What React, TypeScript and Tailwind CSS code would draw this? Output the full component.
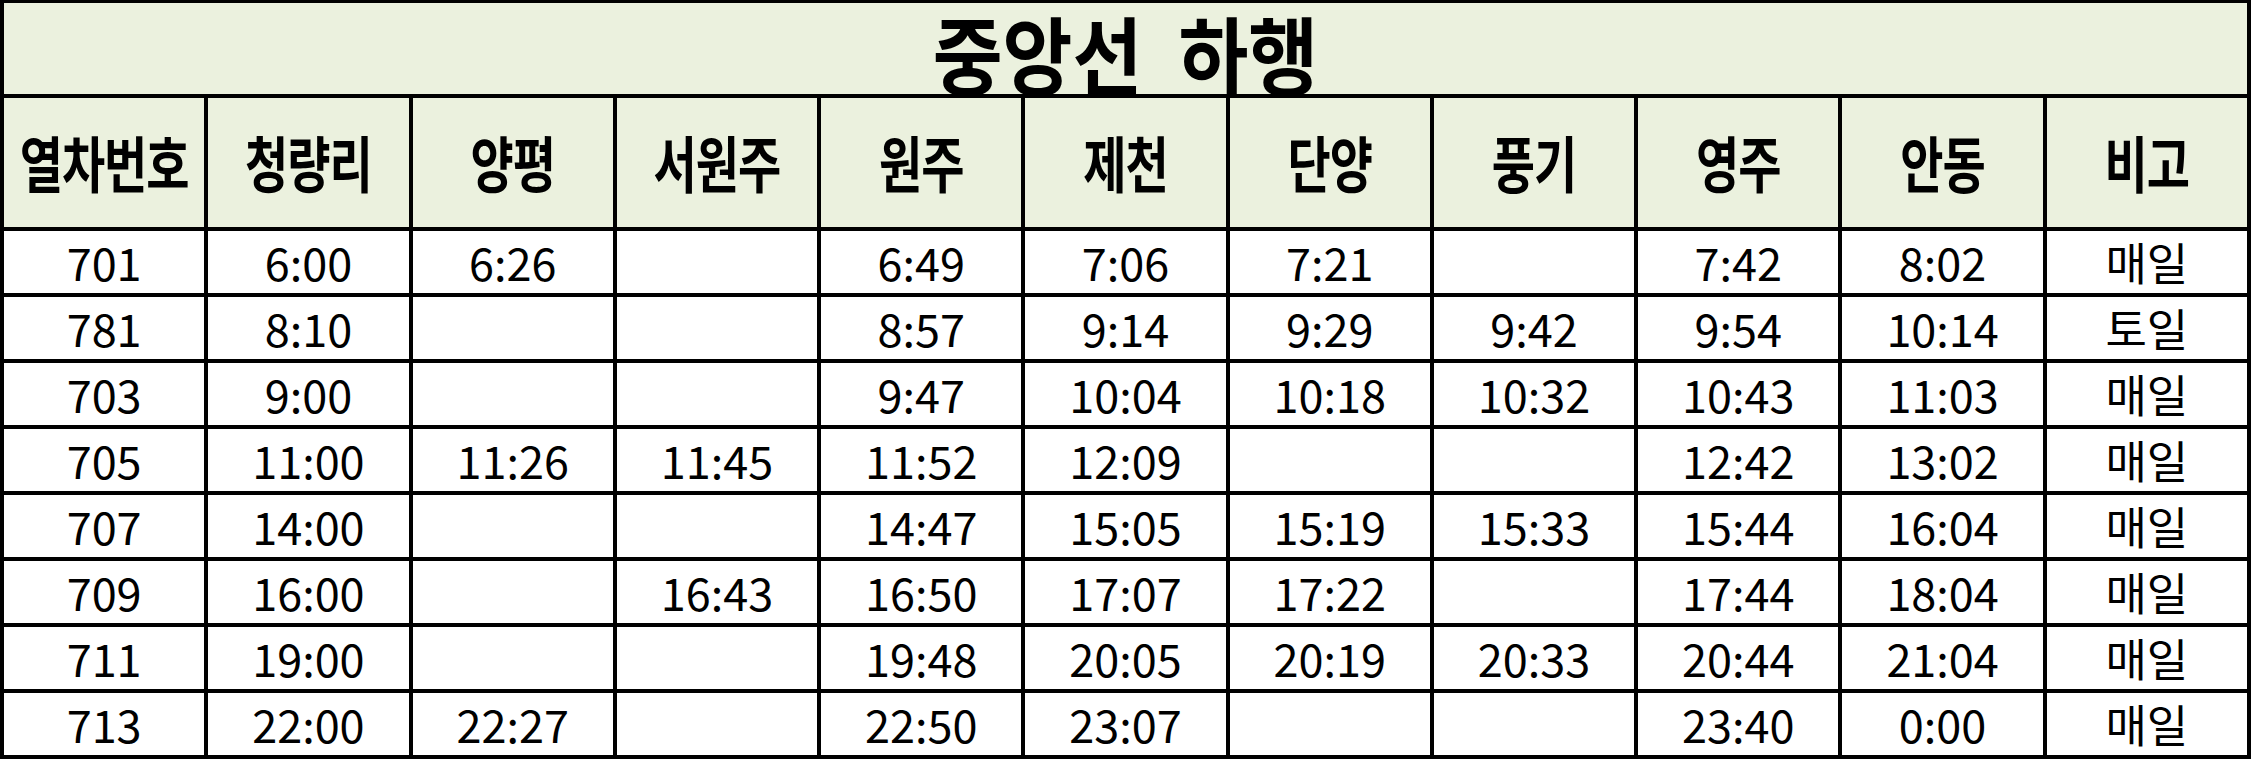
const stations = ["열차번호", "청량리", "양평", "서원주", "원주", "제천", "단양", "풍기", "영주", "안동", "비고"];

const trains: string[][] = [
  ["701", "6:00", "6:26", "", "6:49", "7:06", "7:21", "", "7:42", "8:02", "매일"],
  ["781", "8:10", "", "", "8:57", "9:14", "9:29", "9:42", "9:54", "10:14", "토일"],
  ["703", "9:00", "", "", "9:47", "10:04", "10:18", "10:32", "10:43", "11:03", "매일"],
  ["705", "11:00", "11:26", "11:45", "11:52", "12:09", "", "", "12:42", "13:02", "매일"],
  ["707", "14:00", "", "", "14:47", "15:05", "15:19", "15:33", "15:44", "16:04", "매일"],
  ["709", "16:00", "", "16:43", "16:50", "17:07", "17:22", "", "17:44", "18:04", "매일"],
  ["711", "19:00", "", "", "19:48", "20:05", "20:19", "20:33", "20:44", "21:04", "매일"],
  ["713", "22:00", "22:27", "", "22:50", "23:07", "", "", "23:40", "0:00", "매일"],
];

export default function App() {
  return (
    <div
      className="w-[2251px] h-[759px] bg-white"
      style={{ fontFamily: '"Noto Sans CJK KR", "Noto Sans", sans-serif' }}
    >
      <div className="grid grid-cols-11 grid-rows-[91px_129px_repeat(8,62px)] gap-[4px] bg-black px-[4px] pt-[3px] pb-[4px] h-full">
        {/* Title */}
        <div className="col-span-11 bg-[#EBF1DE] flex items-center justify-center">
          <h1 className="flex items-center gap-[36px] text-[76px] font-bold leading-none text-black scale-y-[1.12] translate-y-[3px]">
            <span>중앙선</span>
            <span>하행</span>
          </h1>
        </div>

        {/* Header */}
        {stations.map((s) => (
          <div key={s} className="bg-[#EBF1DE] flex items-center justify-center overflow-hidden">
            <span className="text-[47px] font-bold leading-[1.2] text-black tracking-[-1px] scale-y-[1.3]">
              {s}
            </span>
          </div>
        ))}

        {/* Rows */}
        {trains.map((row) =>
          row.map((cell, i) => (
            <div key={row[0] + "-" + i} className="bg-white flex items-center justify-center">
              <span className="text-[45px] leading-[1.2] text-black">{cell}</span>
            </div>
          ))
        )}
      </div>
    </div>
  );
}
